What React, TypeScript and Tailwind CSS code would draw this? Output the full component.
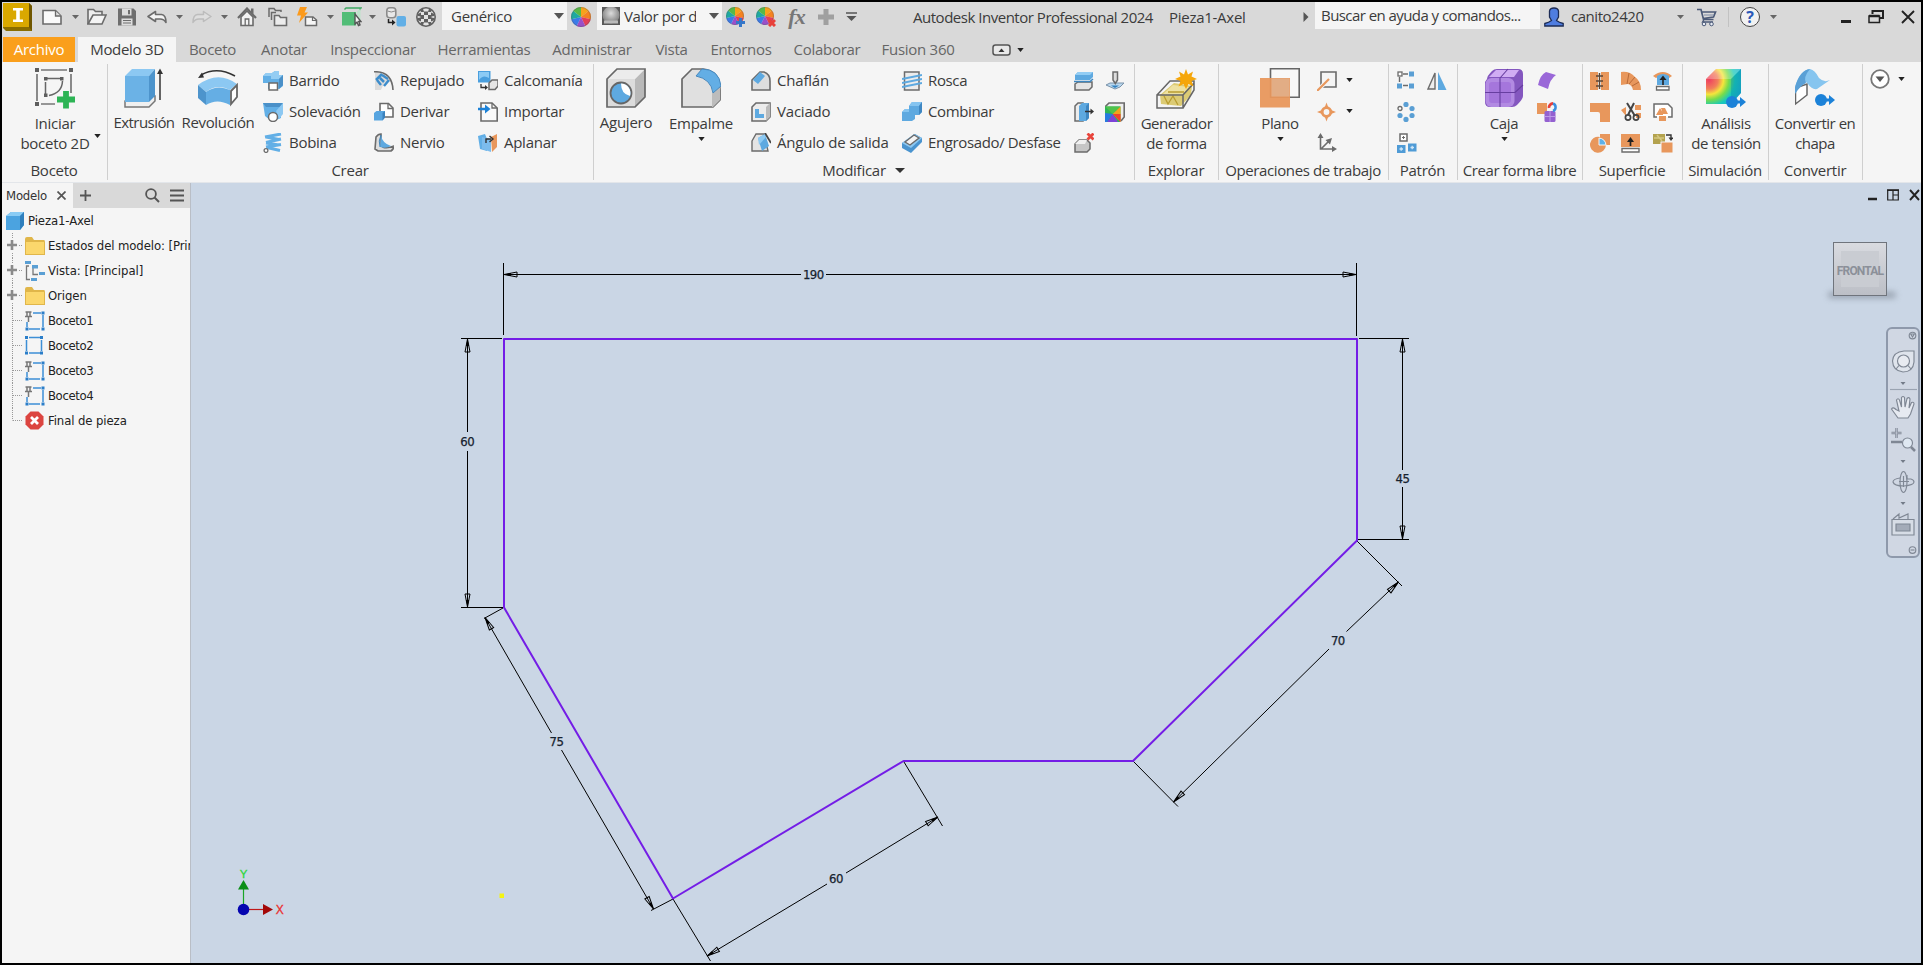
import React from "react";

type P = { className?: string };
const G = "#6b6b6b";
const B = "#62afe6";
const O = "#e8975c";

function Svg({ w = 20, h = 20, vb, className = "", children }: { w?: number; h?: number; vb?: string; className?: string; children: React.ReactNode }) {
  return (
    <svg width={w} height={h} viewBox={vb ?? `0 0 ${w} ${h}`} fill="none" className={`shrink-0 ${className}`}>
      {children}
    </svg>
  );
}

const Caret = ({ className = "" }: P) => (
  <Svg w={7} h={4} className={className}><path d="M0 0H7L3.5 4Z" fill="#666" /></Svg>
);
const DarkCaret = ({ className = "" }: P) => (
  <Svg w={7} h={4} className={className}><path d="M0.3 0H6.7L3.5 4Z" fill="#222" /></Svg>
);

/* ---------- title bar icons ---------- */
const Logo = () => (
  <Svg w={29} h={28} className="ml-[1px]">
    <path d="M0 0H26L29 3V28H3L0 25Z" fill="#8a6d00" />
    <path d="M26 0L29 3V28L26 24Z" fill="#6f5600" />
    <path d="M0 0H26V24H0Z" fill="#d9a800" />
    <path d="M10 5H20V7.5H16.8V16.5H20V19H10V16.5H13.2V7.5H10Z" fill="#fff" />
  </Svg>
);
const NewI = () => (
  <Svg className="ml-[10px]"><path d="M1 3.500H13.5L19 9V17H1Z" fill="#fafafa" stroke={G} strokeWidth="1.600" /><path d="M13.5 4V9H19" fill="#ddd" stroke={G} strokeWidth="1.300" /></Svg>
);
const OpenI = () => (
  <Svg className="ml-[8px]"><path d="M1 17V2.500H6.5L8.500 4.500H15V8" fill="#eee" stroke={G} strokeWidth="1.600" /><path d="M1 17L6 8H19L15 17Z" fill="#f4f4f4" stroke={G} strokeWidth="1.600" /></Svg>
);
const SaveI = () => (
  <Svg className="ml-[10px]"><path d="M1 1.500H16.500L19 4V18.500H1Z" fill="#6e6e6e" /><path d="M5 1.500H14.500V8.500H5Z" fill="#ddd" /><path d="M11 3H13V7.300H11Z" fill="#6e6e6e" /><path d="M4.500 11.500H15.500V18.500H4.500Z" fill="#ddd" /><path d="M6 13.500H14M6 16H14" stroke="#6e6e6e" strokeWidth="1.200" /></Svg>
);
const UndoI = ({ className = "" }: P) => (
  <Svg className={className}><path d="M1 9.500L8.500 4.500V7.500H14.500Q19 8 19 15.500Q17 12 13 12H8.500V14.500Z" fill="#f3f3f3" stroke={G} strokeWidth="1.600" strokeLinejoin="round" /></Svg>
);
const RedoI = ({ className = "" }: P) => (
  <Svg className={className}><path d="M19 9.500L11.500 4.500V7.500H5.500Q1 8 1 15.500Q3 12 7 12H11.500V14.500Z" fill="#dedede" stroke="#bcbcbc" strokeWidth="1.500" strokeLinejoin="round" /></Svg>
);
const HomeI = () => (
  <Svg className="ml-[9px]"><path d="M4 10V18.500H16V10L10 4Z" fill="#f3f3f3" stroke={G} strokeWidth="1.600" /><path d="M1 11L10 1.500L19 11" stroke={G} strokeWidth="2.200" /><path d="M14 1.500H16.500V7L14 5Z" fill={G} /><path d="M8.200 18.500V12H11.800V18.500" stroke={G} strokeWidth="1.300" /></Svg>
);
const FoldersI = () => (
  <Svg className="ml-[11px]"><path d="M1 10V1.500H6L7.500 3.500H13V5" stroke={G} strokeWidth="1.500" /><path d="M3.500 13V5.500H8" stroke={G} strokeWidth="1.500" /><path d="M6.500 18.500V8.500H11L12.500 10.500H18.500V18.500Z" fill="#ececec" stroke={G} strokeWidth="1.600" /></Svg>
);
const BoltI = () => (
  <Svg w={22} className="ml-[8px]"><path d="M4 0H11L8.500 5.500H12L3 16L5 8.500H1Z" fill="#fb9a1c" /><path d="M9.500 10H17L20.500 13V18.500H9.500Z" fill="#f6f6f6" stroke={G} strokeWidth="1.500" /><path d="M16.500 10V13.500H20.500" stroke={G} strokeWidth="1.200" /></Svg>
);
const SelectI = () => (
  <Svg className="ml-[8px]"><path d="M0 5H14V18.500H0Z" fill="#52bd77" /><path d="M2.500 2.500L4 1H19L17.500 3" stroke="#3da862" strokeWidth="1.400" /><path d="M15 4.500L18.500 1.500V13L15 16Z" fill="#bfe3cb" /><path d="M13 7V17L15 15.200L16.500 18.500L18 17.800L16.700 14.500H19Z" fill="#f5f5f5" stroke="#555" strokeWidth="1.400" /></Svg>
);
const ConvertI = () => (
  <Svg className="ml-[10px]"><rect x="0.800" y="0.800" width="9" height="10" rx="3" fill="#e8e8e8" stroke="#8b8b8b" strokeWidth="1.600" /><path d="M1.500 4Q5.300 6 9 4" stroke="#8b8b8b" /><rect x="10.500" y="9" width="9.500" height="10.500" rx="2" fill={B} /><path d="M2.500 12V15.500H7" stroke="#222" strokeWidth="1.500" /><path d="M6 12.500L9.500 15.500L6 18.500Z" fill="#222" /></Svg>
);
const MeshI = () => (
  <Svg className="ml-[10px]"><circle cx="10" cy="10" r="9.200" fill="#e3e3e3" stroke="#606060" strokeWidth="1.600" />
    <g fill="#606060"><path d="M4 3L7 1.500L8 5L5 5ZM16 3L13 1.500L12 5L15 5ZM4 17L7 18.500L8 15L5 15ZM16 17L13 18.500L12 15L15 15ZM1.500 7L5 5.500V9.500L1.500 9ZM18.500 7L15 5.500V9.500L18.500 9ZM1.500 13L5 14.500V10.500L1.500 11ZM18.500 13L15 14.500V10.500L18.500 11Z" /><path d="M8 4.500H12V8H8ZM8 12H12V15.500H8ZM4.500 8H8V12H4.500ZM12 8H15.500V12H12Z" /></g></Svg>
);
const Wheel = ({ className = "", badge = "" }: P & { badge?: "" | "plus" | "x" }) => (
  <Svg className={className}>
    <g transform={badge ? "scale(0.9)" : undefined}>
      <path d="M10 10L10 0A10 10 0 0 1 17.800 3.800Z" fill="#f7a21b" />
      <path d="M10 10L17.800 3.800A10 10 0 0 1 19.700 12.200Z" fill="#f58220" />
      <path d="M10 10L19.700 12.200A10 10 0 0 1 14.300 19Z" fill="#e33f58" />
      <path d="M10 10L14.300 19A10 10 0 0 1 5.700 19Z" fill="#9a4fc9" />
      <path d="M10 10L5.700 19A10 10 0 0 1 0.300 12.200Z" fill="#3b7be8" />
      <path d="M10 10L0.300 12.200A10 10 0 0 1 2.200 3.800Z" fill="#1ea9a0" />
      <path d="M10 10L2.200 3.800A10 10 0 0 1 10 0Z" fill="#57b947" />
      <circle cx="10" cy="10" r="9.500" stroke="#555" strokeOpacity="0.350" />
    </g>
    {badge === "plus" && <path d="M14.500 11V20M10 15.500H19" stroke="#3577c9" strokeWidth="3" />}
    {badge === "x" && <path d="M13 13L19 19M19 13L13 19" stroke="#e8403a" strokeWidth="3" />}
  </Svg>
);
const ShadeI = () => (
  <Svg w={18} h={18} className="ml-[5px]"><defs><radialGradient id="sh" cx="0.5" cy="0.4"><stop stopColor="#dcdcdc" /><stop offset="1" stopColor="#8d8d8d" /></radialGradient></defs><rect width="18" height="18" fill="#5a5a5a" /><circle cx="9" cy="8" r="8.500" fill="url(#sh)" /><path d="M2 15H16" stroke="#bbb" strokeWidth="3" /></Svg>
);
const UserI = () => (
  <Svg className="ml-[4px]"><path d="M0.800 19V16.500Q5 15.500 7.500 13.500L5.500 10V4Q6 1 10 1T14.500 4V10L12.500 13.500Q15 15.500 19.200 16.500V19Z" fill="#4f7de0" stroke="#1d2c55" strokeWidth="1.300" /></Svg>
);
const CartI = () => (
  <Svg w={21} className="ml-[12px]"><path d="M1 2.500H5L7.500 12.500H17.500M5.500 5H19.500L17.500 10L7 11.500" stroke="#4b5a78" strokeWidth="1.700" /><path d="M8 12.500L6.500 15H17" stroke="#4b5a78" strokeWidth="1.300" /><circle cx="8" cy="17" r="1.800" fill="#e8ecf5" stroke="#4b5a78" /><circle cx="15.500" cy="17" r="1.800" fill="#e8ecf5" stroke="#4b5a78" /><path d="M8 8H18" stroke="#7d8aa6" /></Svg>
);
const HelpI = () => (
  <span className="ml-[11px] flex h-[20px] w-[20px] shrink-0 items-center justify-center rounded-full border-[1.5px] border-[#444] bg-[#f2f2f2] text-[16px] font-bold leading-none tracking-normal text-[#2c59b8]">?</span>
);

/* ---------- ribbon icons : large ---------- */
const SketchL = () => (
  <Svg w={40} h={42}><path d="M6 2H32M2 6V33M36 6V25M6 36H20" stroke="#777" strokeWidth="1.700" /><path d="M11 10.500H26M10.500 14V26M27.500 13Q27 25 14 27.500" stroke="#666" strokeWidth="1.500" /><g fill="#5e5e5e"><path d="M0 0H4V4H0ZM34 0H38V4H34ZM0 34H4V38H0ZM9 9H12.500V12.500H9ZM25 9H28.500V12.500H25ZM9 25.500H12.500V29H9Z" /></g><path d="M31 23V40.500M22 31.500H40" stroke="#2db455" strokeWidth="5.800" /></Svg>
);
const ExtrudeL = () => (
  <Svg w={40} h={40}><path d="M1 33L6 28H31V33L25 39H1Z" fill="#f0f0f0" stroke="#777" strokeWidth="1.500" /><path d="M1 8H25V34H1Z" fill="#6bb2e6" /><path d="M1 8L8 1H31L25 8Z" fill="#8cc8f2" /><path d="M25 8L31 1V28L25 34Z" fill="#4d94cc" /><path d="M36 32V4" stroke="#333" strokeWidth="1.500" /><path d="M36 0.500L33 6H39Z" fill="#333" /></Svg>
);
const RevolveL = () => (
  <Svg w={42} h={40}><path d="M1 17Q21 2 40 16L33 22Q20 15 9 24Z" fill="#8cc8f2" /><path d="M1 17L9 24V37L1 30Z" fill="#4d94cc" /><path d="M9 24Q20 16 33 22V37Q20 30 9 37Z" fill="#65aee4" /><path d="M34 23L40 17V29L34 36Z" fill="#fff" stroke="#666" strokeWidth="1.800" /><path d="M4 7Q20 -2 38 8" stroke="#333" strokeWidth="1.600" /><path d="M1 10L5 4.500L7 9.500Z" fill="#333" /></Svg>
);
const HoleL = () => (
  <Svg w={40} h={40}><path d="M1 11L11 1H39V29L29 39H1Z" fill="#dcdcdc" /><path d="M29 11L39 1V29L29 39Z" fill="#b9b9b9" /><path d="M1 11L11 1H39L29 11Z" fill="#ececec" /><path d="M1 11L11 1H39V29L29 39H1Z" stroke="#686868" strokeWidth="1.700" /><circle cx="15" cy="25" r="10.500" fill="#5ea9e0" stroke="#666" strokeWidth="1.800" /><path d="M15 15.500A9.500 9.500 0 0 1 24 28Q15 26 15 15.500Z" fill="#fff" /></Svg>
);
const FilletL = () => (
  <Svg w={40} h={40}><path d="M1 11L11 1H22Q39 3 39 22V32L32 39H1Z" fill="#e0e0e0" stroke="#686868" strokeWidth="1.700" /><path d="M31 25L39 19V32L32 39H31Z" fill="#bcbcbc" /><path d="M15 8L21 1Q38 1 40 18L32 25Q30 11 15 8Z" fill="#63aee5" stroke="#4888bd" /></Svg>
);
const ShapeL = () => (
  <Svg w={42} h={42}><path d="M4 27L18 15L36 18L35 27L25 38L5 36Z" fill="#dccb74" /><path d="M6 27L17 17L33 19L25 28Z" fill="#eee1a0" /><path d="M8 28L12 36L17 28L22 37M12 24L28 24" stroke="#b99d30" strokeWidth="1.300" /><path d="M1 27H27V40H1ZM1 27L14 13H38V22L27 40M27 27L38 15" stroke="#666" strokeWidth="1.500" /><path d="M30 1L32 6.500L37 3.500L35.500 8.500L41 11L35.500 13L37.500 18.500L32.500 16L30 21L27.500 16L22.500 18.500L24.500 13L19 11L24.500 8.500L23 3.500L28 6.500Z" fill="#f5a60a" /></Svg>
);
const PlaneL = () => (
  <Svg w={40} h={40}><path d="M10.500 0.800H39.200V29.200H10.500Z" fill="#f8f8f8" stroke="#666" strokeWidth="1.600" /><path d="M0 10H30V39.500H0Z" fill={O} fillOpacity="0.950" /><path d="M11.500 10.500H29.500V28.500H11.500Z" fill="#e2ad85" /></Svg>
);
const BoxL = () => (
  <Svg w={40} h={40}><path d="M3 11Q3 8 8 3Q10 1 13 1H34Q39 1 39 6V28Q39 31 33 37Q31 39 28 39H6Q1 39 1 34V14Z" fill="#8457bf" /><rect x="1.500" y="10" width="29" height="29" rx="6" fill="#b28ae2" /><path d="M5 9L12 2H35L30 9Z" fill="#d0adf3" /><rect x="5" y="14" width="22" height="21" rx="3" fill="#a576dc" /><path d="M16 10V39M1 24.500H31L39 17M16 10L24 1" stroke="#673ea0" strokeWidth="1.100" /></Svg>
);
const StressL = () => (
  <Svg w={40} h={40}>
    <defs><radialGradient id="st" gradientUnits="userSpaceOnUse" cx="3" cy="12" r="36"><stop stopColor="#ee3f60" /><stop offset="0.250" stopColor="#f2805a" /><stop offset="0.400" stopColor="#f5e53c" /><stop offset="0.550" stopColor="#77dc4c" /><stop offset="0.720" stopColor="#18c9bb" /><stop offset="1" stopColor="#1aa6d6" /></radialGradient></defs>
    <path d="M0 11L10 1H35V25L25 36H0Z" fill="url(#st)" /><path d="M0 11L10 1H35L25 11Z" fill="#fff" fillOpacity="0.250" /><path d="M25 11L35 1V25L25 36Z" fill="#0a7fa0" fillOpacity="0.300" />
    <circle cx="26" cy="34" r="6" fill="#1c82d8" /><path d="M28 34H36" stroke="#1c82d8" strokeWidth="3" /><path d="M34 29L40 34L34 39Z" fill="#1c82d8" />
  </Svg>
);
const SheetL = () => (
  <Svg w={40} h={40}><path d="M0.500 20V36L12 27V16Z" fill="#fff" stroke="#666" strokeWidth="1.500" /><path d="M0 19Q5 2 15 1Q20 2 24 10Q29 15 35 12L22 21Q17 22 13 16Q10 11 0 19Z" fill="#86c5ef" /><path d="M0 19Q5 2 15 1Q8 9 11 15Q5 18 0 26Z" fill="#5aa0d6" /><circle cx="26" cy="32" r="6" fill="#1c82d8" /><path d="M28 32H36" stroke="#1c82d8" strokeWidth="3" /><path d="M34 27L40 32L34 37Z" fill="#1c82d8" /></Svg>
);

/* ---------- ribbon icons : small ---------- */
const S: Record<string, React.ReactNode> = {
  Barrido: <><path d="M0 5L3 2H9L12 0H16V4H20V15L16 18H5V12H0Z" fill={B} /><path d="M0 5L3 2H9L12 0H16V4H20L16 8H8V5Z" fill="#94cdf3" /><path d="M16 8L20 4V14L16 18Z" fill="#4a90c8" /><rect x="6" y="12" width="8.500" height="7" fill="#fff" stroke={G} strokeWidth="1.500" /></>,
  "Solevación": <><path d="M0 1H20L18 9V16L13 18H7L2 14Z" fill={B} /><path d="M0 1H20L17 5H3Z" fill="#4a90c8" /><path d="M13 9L20 1V12L16 17Z" fill="#8cc8f2" /><circle cx="10" cy="15" r="4.500" fill="#fff" stroke={G} strokeWidth="1.500" /></>,
  Bobina: <><path d="M2 4L18 1M3 4L16 6.500M3 9.500L18 6M3 10L16 12M3 14L18 11.500M4 14.500L17 17.500" stroke={B} strokeWidth="3" /><circle cx="3" cy="17.500" r="1.900" fill="#fff" stroke={G} strokeWidth="1.300" /></>,
  Repujado: <><path d="M1 1Q18 1 19 19V12Q11 7 7 19H1Z" fill="#dcdcdc" /><path d="M0 0.800Q18 0 19 19" stroke={G} strokeWidth="1.600" /><path d="M2 9L8 3M3 9L7 14M6 7L10 11M8 4L14 8M10 15L15 9" stroke="#3d8dcc" strokeWidth="2.500" /></>,
  Derivar: <><path d="M6 9V1.500H14.500L19 6V15H11" fill="#fff" stroke={G} strokeWidth="1.600" /><path d="M14 2V6.500H19" stroke={G} strokeWidth="1.300" /><path d="M0 11L2.500 9H11V15.500L8.500 18.500H0Z" fill="#58a5e0" /><path d="M8.500 11L11 9V15.500L8.500 18.500Z" fill="#3c82bd" /></>,
  Nervio: <><path d="M2 4Q4 1 7 1V12Q10 17 20 13Q20 16 17 18H4L1 16Z" fill="#dedede" stroke={G} strokeWidth="1.600" /><path d="M7 2Q8 10 17 13Q12 16 6 14Z" fill="#5ea9e0" /><path d="M7 2Q4 8 6 14" stroke="#3d85bd" /></>,
  "Calcomanía": <><rect x="0" y="0" width="12.500" height="11.500" fill="#4a9fde" /><path d="M1 9Q5 3 11 7V1H1Z" fill="#8ccbf5" /><path d="M11 12L14 9H20V15L17 18.500H11Z" fill="#e5e5e5" stroke={G} strokeWidth="1.500" /><path d="M3 13V16.500H8" stroke="#333" strokeWidth="1.300" /><path d="M7 14L10 16.500L7 19Z" fill="#333" /></>,
  Importar: <><path d="M3 1H14L19.200 6V19H3Z" fill="#fafafa" stroke={G} strokeWidth="1.600" /><path d="M14 1V6H19" stroke={G} strokeWidth="1.300" /><path d="M0 7H9" stroke="#1c82d8" strokeWidth="2.500" /><path d="M7 2.500L12.500 7L7 11.500Z" fill="#1c82d8" /></>,
  Aplanar: <><path d="M0 3L7 1L9 6V18L2 16Z" fill={B} /><path d="M13 4L19 1V14L14 19Z" fill={O} /><path d="M4 4L13 6V19L4 16Z" fill="#7cbced" /><path d="M8 10V6H13M11.500 3L15 6L11.500 9" stroke="#333" strokeWidth="1.400" /></>,
  "Chaflán": <><path d="M1 9L9 1H13Q19 3 19 10V19H1Z" fill="#dedede" stroke={G} strokeWidth="1.600" /><path d="M2 9L9 1L14 5L7 13Z" fill="#5ea9e0" /></>,
  Vaciado: <><path d="M1 5L5 1H19V15L15 19H1Z" fill="#ececec" stroke={G} strokeWidth="1.600" /><path d="M15 5L19 1V15L15 19Z" fill="#bbb" /><path d="M4 7H8V12H13V16H4Z" fill="#5ea9e0" /></>,
  "Ángulo de salida": <><path d="M1 8L5 1H13L17 18H1Z" fill="#e4e4e4" stroke={G} strokeWidth="1.400" /><path d="M7 5L14 1L18 13L11 18Z" fill="#5ea9e0" /><path d="M7 5L14 1L15 4L8 12Z" fill="#8dcaf3" /><path d="M14 0L20 10" stroke="#444" strokeWidth="1.800" /></>,
  Rosca: <><path d="M2.500 1H17V19H2.500Z" fill="#ececec" stroke={G} strokeWidth="1.500" /><path d="M0 8L20 4M0 12L20 8M0 16L20 12" stroke="#5ea9e0" strokeWidth="2.200" /></>,
  Combinar: <><path d="M0 10L3 7H7V4L10 0H20V10L17 13H13V17L10 19H0Z" fill="#5ea9e0" /><path d="M7 4L10 0H20L17 4ZM0 10L3 7H7V10Z" fill="#85c4f0" /><path d="M17 4L20 0V10L17 13Z" fill="#3f87c2" /></>,
  "Engrosado/ Desfase": <><path d="M0 10V15L9 20L20 9V5L13 1Z" fill="#4a94cf" /><path d="M0 10L12 1L20 5L9 15Z" fill="#8dc8f1" /><path d="M3 9L12 2L17 5L8 12Z" fill="#f4f4f4" stroke={G} strokeWidth="1.400" /></>,
  split: <><path d="M1 4L4 1H19V6L16 9H1Z" fill="#5ea9e0" /><path d="M1 4L4 1H19L16 4Z" fill="#93cdf4" /><path d="M1 13L4 11H18V16L15 19H1Z" fill="#e4e4e4" stroke={G} strokeWidth="1.500" /><path d="M0 10.500H16L19 8" stroke="#3c86c0" strokeWidth="1.500" /></>,
  direct: <><path d="M1 14L5 12H19L15 16L10 18Z" fill="#b9d7ee" stroke="#7b93aa" /><path d="M6 14.500H14L10 17Z" fill="#2f80c0" /><path d="M8 1H12.500V9L10.300 12.500L8 9Z" fill="#ddd" stroke={G} strokeWidth="1.500" /></>,
  move: <><path d="M1 4L4 1H9V19H1Z" fill="#ececec" stroke={G} strokeWidth="1.500" /><path d="M5 4L8 1H15V16L12 19H5Z" fill="#5ea9e0" /><path d="M12 4L15 1V16L12 19Z" fill="#3f87c2" /><path d="M11 9.500H18" stroke="#333" strokeWidth="1.500" /><path d="M16.500 6.500L20 9.500L16.500 12.500Z" fill="#333" /></>,
  color: <><path d="M0 5L4 1H19.200V15L16 19" fill="#eee" stroke={G} strokeWidth="1.600" /><rect y="4.500" width="15.500" height="15.500" fill="#2fb457" /><path d="M7.700 12L0 4.500H15.500Z" fill="#4fc24a" /><path d="M7.700 12L15.500 4.500V20Z" fill="#f2a21c" /><path d="M7.700 12L15.500 12V20Z" fill="#ef4130" /><path d="M7.700 12L13 20H2Z" fill="#7c42d8" /><path d="M7.700 12L2 20H0V11Z" fill="#2779e0" /></>,
  erase: <><path d="M1 11L5 7H13L16 10V16L13 19H1Z" fill="#c6c6c6" stroke={G} strokeWidth="1.500" /><path d="M1 11L5 7H13L11 11Z" fill="#f0f0f0" /><path d="M13.500 0.500L19.500 6.500M19.500 0.500L13.500 6.500" stroke="#e8453c" strokeWidth="2.800" /></>,
  axis: <><path d="M4 1H19V16H4Z" stroke={G} strokeWidth="1.600" /><path d="M0 20L12 8" stroke="#f5f5f5" strokeWidth="4" /><path d="M0 20L12 8" stroke={O} strokeWidth="2.200" /></>,
  point: <><circle cx="9.500" cy="10" r="4.300" stroke={O} strokeWidth="2.800" /><path d="M9.500 0.500L11.500 6H7.500ZM9.500 19.500L11.500 14H7.500ZM0 10L5 8V12ZM19 10L14 8V12Z" fill={O} /></>,
  ucs: <><path d="M3.500 2V16H18M4 16L13 7" stroke={G} strokeWidth="1.600" /><path d="M3.500 0L0.500 5H6.500ZM20 16L15 13V19ZM15 5L8.500 7L13 11.500Z" fill={G} /></>,
  rect: <><path d="M6 3H11M6 14.500H11M2.500 6V11" stroke={G} strokeWidth="1.400" /><rect x="1" y="1" width="4" height="4" fill="#fff" stroke={G} strokeWidth="1.300" /><path d="M12 0.500H17V5.500H12ZM0 12.500H5V17.500H0ZM12 12.500H17V17.500H12Z" fill="#5a9fd4" /></>,
  circ: <><circle cx="3" cy="6.500" r="2" fill="#fff" stroke={G} strokeWidth="1.300" /><g fill="#5a9fd4"><circle cx="9" cy="2.500" r="2.600" /><circle cx="15" cy="6.500" r="2.600" /><circle cx="15" cy="13.500" r="2.600" /><circle cx="9" cy="17.400" r="2.600" /><circle cx="3" cy="13.500" r="2.600" /></g></>,
  sketchp: <><rect x="3" y="1" width="7" height="7" fill="#fff" stroke={G} strokeWidth="1.500" /><path d="M5 4.500H8M6.500 3V6" stroke={G} /><path d="M0 12H8.500V20H0ZM11 10.500H19.500V18.500H11Z" fill="#4f9bd6" /><path d="M2.500 16H6M4.200 14.200V17.700M13.500 14.500H17M15.200 12.700V16.200" stroke="#cfe6f7" strokeWidth="1.300" /></>,
  mirror: <><path d="M8 2V18H1Z" fill="#ededed" stroke={G} strokeWidth="1.400" /><path d="M11 1V19H19.500Z" fill="#5ea9e0" /></>,
  face: <><path d="M1 14Q3 4 9 1L19 4Q13 8 11 18Z" fill="#9a68d8" /></>,
  conv: <><rect y="1" width="10" height="11" fill={O} /><rect x="7.500" y="9" width="11" height="11" rx="1.500" fill="#9461d0" /><path d="M7.500 14.500H18.500M13 9V20" stroke="#bd9ae8" /><path d="M12 6A4 4 0 0 1 16 1.500" stroke="#e8403a" strokeWidth="2.800" /><path d="M16 1.500A4 4 0 0 1 16 9" stroke="#3a8fe0" strokeWidth="2.500" /></>,
  s1: <><path d="M0 1H8V19H0ZM11 1H19V19H11Z" fill={O} /><path d="M9.500 2V18M6 5H13M6 10H13M6 15H13" stroke="#5b4636" strokeWidth="1.400" /></>,
  s2: <><path d="M0 1Q9 0 14 6Q20 10 20 19H12Q11 14 7 13L0 14Z" fill={O} /><path d="M8 2L6 13M14 6L8 13M18 11L11 15" stroke="#b86a38" /></>,
  s3: <><path d="M0 5Q10 -3 19 5L16 7Q10 2 3 7Z" fill={O} /><path d="M4 5Q10 1 16 5V14H4Z" fill="#5ea9e0" /><path d="M3.500 15.500H16V19H3.500Z" fill="#fff" stroke={G} strokeWidth="1.300" /><path d="M10 14V7" stroke="#222" strokeWidth="1.600" /><path d="M10 4.500L6.500 9H13.500Z" fill="#222" /></>,
  s4: <path d="M0 1H20V20H10V12Q10 10 8 10H0Z" fill={O} />,
  s5: <><path d="M0 8L5 5V14ZM14 3H20V8H14ZM15 11H20V16H15Z" fill={O} /><path d="M6 1L14 14M13 1L7 13" stroke="#444" strokeWidth="2" /><circle cx="7" cy="15.500" r="2.600" stroke="#444" strokeWidth="1.700" /><circle cx="15" cy="15.500" r="2.600" stroke="#444" strokeWidth="1.700" /></>,
  s6: <><path d="M4 15H1V2H15L19 6V15H15" stroke={G} strokeWidth="1.500" fill="#fff" /><path d="M3 13L7 6L10 11V13ZM8 6H12L15 12H10Z" fill={O} /><rect x="6" y="14" width="7" height="5" fill={O} /></>,
  s7: <><path d="M10 1H20V12H16A8 8 0 1 1 10 4Z" fill={O} /><path d="M9 5A8 8 0 0 1 16 12H9Z" fill="#5eb1ea" stroke="#f5f5f5" /></>,
  s8: <><path d="M0 1H19V14H0Z" fill={O} /><path d="M1 15.500H18V19H1Z" fill="#fff" stroke={G} strokeWidth="1.400" /><path d="M9.500 13V7" stroke="#222" strokeWidth="1.700" /><path d="M9.500 4L6 9H13Z" fill="#222" /></>,
  s9: <><path d="M0 1H12V11H0Z" fill="#b3a24e" /><path d="M1 5H11M4 2L9 8" stroke="#d5c77f" strokeWidth="1.500" /><rect x="8" y="9" width="12" height="11" fill={O} stroke="#f5f5f5" /><path d="M13 2H18V6" stroke="#333" strokeWidth="1.400" /><path d="M15.500 4.500H20.500L18 8Z" fill="#333" /></>,
};
const Small = ({ n, className = "" }: { n: string; className?: string }) => <Svg className={className}>{S[n]}</Svg>;

/* ---------- ribbon building blocks ---------- */
function Group({ label, className, children, caret }: { label: string; className: string; children: React.ReactNode; caret?: boolean }) {
  return (
    <section className={`flex h-[120px] shrink-0 flex-col bg-[linear-gradient(#cfcfcf,#cfcfcf)] bg-[length:1px_116px] bg-[position:right_2px] bg-no-repeat ${className}`}>
      <div className="flex h-[97px] items-start">{children}</div>
      <div className="flex h-[22px] items-center justify-center whitespace-nowrap pr-[2px]">
        {label}
        {caret && <Svg w={10} h={5} className="ml-[9px]"><path d="M0 0H10L5 5Z" fill="#333" /></Svg>}
      </div>
    </section>
  );
}
function Big({ icon, lines, className, caret, up }: { icon: React.ReactNode; lines: string[]; className: string; caret?: boolean; up?: boolean }) {
  return (
    <button className={`flex shrink-0 flex-col items-center pt-[6px] leading-[20px] ${className}`}>
      <span className="flex h-[40px] items-start">{icon}</span>
      <span className={up ? "mt-[4px] flex flex-col items-center whitespace-nowrap" : "mt-[5px] flex flex-col items-center whitespace-nowrap"}>
        {lines.map((l) => <span key={l}>{l}</span>)}
      </span>
      {caret && <DarkCaret className="mt-[4px]" />}
    </button>
  );
}
function Column({ names, className }: { names: string[]; className: string }) {
  return (
    <div className={`flex shrink-0 flex-col pt-[3px] ${className}`}>
      {names.map((n) => (
        <button key={n} className="flex h-[31px] items-center gap-[6px] whitespace-nowrap"><Small n={n} /><span className="pb-px">{n}</span></button>
      ))}
    </div>
  );
}
function Icons({ names, className }: { names: string[]; className: string }) {
  return (
    <div className={`flex shrink-0 flex-col pt-[3px] ${className}`}>
      {names.map((n) => <button key={n} className="flex h-[31px] items-center"><Small n={n} /></button>)}
    </div>
  );
}

const tabs: [string, string][] = [
  ["Boceto", "w-[73px]"], ["Anotar", "w-[70px]"], ["Inspeccionar", "w-[108px]"], ["Herramientas", "w-[114px]"], ["Administrar", "w-[102px]"],
  ["Vista", "w-[57px]"], ["Entornos", "w-[82px]"], ["Colaborar", "w-[90px]"], ["Fusion 360", "w-[92px]"],
];

/* ---------- model browser ---------- */
const Folder = () => <Svg w={20} h={18}><path d="M0 2Q0 0 2 0H7L9 3H19Q20 3 20 5V18H0Z" fill="#e0b64a" /><path d="M1 5H19V17H1Z" fill="#fbd76c" /></Svg>;
const ViewsIcon = () => <Svg w={20} h={20}><path d="M4 5H1.500V18.500H5M8 7V13.500H13" stroke="#777" strokeWidth="1.300" /><path d="M0 0H6V3H0ZM7 4H13V7.500H7ZM14 11H20V14H14ZM6 17H12V20H6Z" fill="#5a9fd4" /></Svg>;
const SketchIcon = ({ pin }: { pin?: boolean }) => (
  <Svg w={20} h={20}>
    {pin ? <path d="M8 2H16M18 4V16M4 18H15M2 16V11" stroke="#3d8fd6" strokeWidth="1.500" /> : <path d="M4 1.500H15M16.500 4V15M4 17H15M1.500 4V15" stroke="#3d8fd6" strokeWidth="1.500" />}
    {pin ? <path d="M16.500 0.500H19.500V3.500H16.500ZM0.500 16.500H3.500V19.500H0.500ZM16.500 16.500H19.500V19.500H16.500Z" fill="#2b7ec9" /> : <path d="M0 0H3V3H0ZM15 0H18V3H15ZM0 15.500H3V18.500H0ZM15 15.500H18V18.500H15Z" fill="#2b7ec9" />}
    {pin && <path d="M0.500 1H6.500M2 1V5M5 1V5M0 5.500H7M3.500 6V11" stroke="#777" strokeWidth="1.500" />}
  </Svg>
);
const EndIcon = () => <Svg w={19} h={19}><path d="M5.500 0.500H13.500L18.500 5.500V13.500L13.500 18.500H5.500L0.500 13.500V5.500Z" fill="#dc4540" /><path d="M6 6L13 13M13 6L6 13" stroke="#fff" strokeWidth="2.800" /></Svg>;

const tree: { t: string; i: React.ReactNode; plus?: boolean; c?: string }[] = [
  { t: "Estados del modelo: [Principal]", i: <Folder />, plus: true },
  { t: "Vista: [Principal]", i: <ViewsIcon />, plus: true, c: "tracking-[0px]" },
  { t: "Origen", i: <Folder />, plus: true },
  { t: "Boceto1", i: <SketchIcon pin />, c: "tracking-[-0.4px]" },
  { t: "Boceto2", i: <SketchIcon />, c: "tracking-[-0.4px]" },
  { t: "Boceto3", i: <SketchIcon pin />, c: "tracking-[-0.4px]" },
  { t: "Boceto4", i: <SketchIcon pin />, c: "tracking-[-0.4px]" },
  { t: "Final de pieza", i: <EndIcon /> },
];

/* ---------- sketch ---------- */
function Head({ x, y, a }: { x: number; y: number; a: number }) {
  return <g transform={`translate(${x} ${y}) rotate(${a})`}><path d="M0 0L13 -2.500V2.500Z" stroke="#000" strokeWidth="1" /><path d="M0 0L7 -1.500V1.500Z" fill="#000" /></g>;
}
function Sketch() {
  return (
    <svg className="block h-[780px] w-[1730px]" viewBox="191 183 1730 780" fill="none">
      <g stroke="#000" strokeWidth="1">
        <path d="M503.500 263V335M1356.500 263V336M504 274.500H801M826 274.500H1356" />
        <path d="M461 338.500H502M461 607.500H503M467.500 339V432M467.500 451V607" />
        <path d="M1359 338.500H1409M1358 539.500H1409M1402.500 339V470M1402.500 487V539" />
        <path d="M1357 541L1402 586M1133 761L1178 806.500M1398.500 582L1346.500 631.500M1329 649L1173.500 802" />
        <path d="M503 608L484 618.500M673 899L651 910.500M485 617.500L551.500 733M561.500 750L653.500 909" />
        <path d="M904 762L942.500 826M673 899L710.500 961M938 817L846 873M827 884L707 956" />
      </g>
      <Head x={504} y={274.5} a={0} /><Head x={1356} y={274.5} a={180} />
      <Head x={467.5} y={339} a={90} /><Head x={467.5} y={607} a={-90} />
      <Head x={1402.5} y={339} a={90} /><Head x={1402.5} y={539} a={-90} />
      <Head x={1398.5} y={582} a={135.5} /><Head x={1173.5} y={802} a={-44.5} />
      <Head x={485} y={617.5} a={60} /><Head x={653.5} y={909} a={240} />
      <Head x={938} y={817} a={149} /><Head x={707} y={956} a={-31} />
      <path d="M504 339H1357V540.500L1133 761H903.500L673 898.500L504 607.500Z" stroke="#741de6" strokeWidth="2" strokeLinejoin="round" />
      <g fill="#16222e" stroke="#16222e" strokeWidth="0.250" fontSize="13" letterSpacing="-0.550" textAnchor="middle" className="font-['DejaVu_Sans_Condensed','DejaVu_Sans',sans-serif] [font-stretch:condensed]">
        <text x="813.300" y="279">190</text><text x="467.200" y="446">60</text><text x="1402.500" y="483">45</text>
        <text x="1337.800" y="644.500">70</text><text x="556.500" y="746">75</text><text x="836" y="882.500">60</text>
      </g>
      <rect x="499.500" y="893.500" width="4.500" height="4.500" fill="#f4f411" />
      <path d="M243.500 904V885" stroke="#18a526" strokeWidth="1.200" /><path d="M243.500 880L249 889.500H238Z" fill="#0b8f17" />
      <path d="M249 909.500H264" stroke="#c01818" strokeWidth="1.200" /><path d="M273 909.500L263 904V915Z" fill="#a30808" />
      <circle cx="243.500" cy="909.500" r="5.800" fill="#0505b0" />
      <text x="243.500" y="877.500" fontSize="11.500" textAnchor="middle" fill="#2cd63a" stroke="#2cd63a" strokeWidth="0.300" className="font-['Liberation_Sans',sans-serif]">Y</text>
      <text x="279.500" y="914" fontSize="12" textAnchor="middle" fill="#ea3030" stroke="#ea3030" strokeWidth="0.300" className="font-['Liberation_Sans',sans-serif]">X</text>
    </svg>
  );
}

export default function App() {
  return (
    <div className="flex h-[965px] w-[1923px] flex-col overflow-hidden border-2 border-black bg-[#f5f5f5] font-['Open_Sans','Noto_Sans',sans-serif] text-[15px] tracking-[-0.27px] text-[#3b3b3b] [font-stretch:88%]">
      {/* title bar */}
      <header className="flex h-[35px] shrink-0 items-start bg-[#d9d9d9]">
        <div className="flex h-[29px] items-center whitespace-nowrap">
          <Logo /><NewI /><Caret className="ml-[10px]" /><OpenI /><SaveI /><UndoI className="ml-[10px]" /><Caret className="ml-[9px]" />
          <RedoI className="ml-[9px]" /><Caret className="ml-[9px]" /><HomeI /><FoldersI /><BoltI /><Caret className="ml-[9px]" /><SelectI /><Caret className="ml-[7px]" /><ConvertI /><MeshI />
          <div className="ml-[6px] flex h-[28px] w-[125px] items-center justify-between self-start bg-[#f5f5f5] pl-[9px] pr-[3px]">Genérico<Svg w={10} h={6}><path d="M0 0H10L5 6Z" fill="#555" /></Svg></div>
          <Wheel className="ml-[4px]" />
          <div className="ml-[6px] flex h-[28px] w-[125px] items-center self-start bg-[#f5f5f5]">
            <ShadeI /><span className="ml-[4px] w-[72px] overflow-hidden tracking-[-0.4px]">Valor por defecto</span><Svg w={10} h={6} className="ml-[13px]"><path d="M0 0H10L5 6Z" fill="#555" /></Svg>
          </div>
          <Wheel className="ml-[4px]" badge="plus" /><Wheel className="ml-[10px]" badge="x" />
          <span className="ml-[10px] w-[21px] text-center font-['Liberation_Serif',serif] text-[22px] font-bold italic leading-[20px] tracking-[-1px] text-[#777]">fx</span>
          <Svg w={16} h={16} className="ml-[11px]"><path d="M8 0V16M0 8H16" stroke="#a0a0a0" strokeWidth="5" /></Svg>
          <Svg w={11} h={9} className="ml-[12px]"><path d="M0 1H11" stroke="#555" strokeWidth="1.500" /><path d="M0.500 4H10.500L5.500 9Z" fill="#555" /></Svg>
          <span className="ml-[56px] w-[240px] pt-[1px] tracking-[-0.48px]">Autodesk Inventor Professional 2024</span>
          <span className="ml-[16px] w-[78px] pt-[1px]">Pieza1-Axel</span>
          <Svg w={6} h={10} className="ml-[56px]"><path d="M0.500 0L5.500 5L0.500 10Z" fill="#555" /></Svg>
          <div className="ml-[6px] flex h-[27px] w-[225px] items-center self-start bg-[#f5f5f5] pb-px pl-[6px] tracking-[-0.56px]">Buscar en ayuda y comandos...</div>
          <UserI /><span className="ml-[7px] w-[74px] tracking-[-0.46px]">canito2420</span><Caret className="ml-[32px]" /><CartI />
          <span className="ml-[11px] h-[20px] w-px bg-[#c2c2c2]" /><HelpI /><Caret className="ml-[10px]" />
          <Svg w={10} h={14} className="ml-[64px]"><path d="M0 11.500H10" stroke="#222" strokeWidth="3" /></Svg>
          <Svg w={16} h={16} className="ml-[17px]"><path d="M4.500 5V2H15V9H12" stroke="#222" strokeWidth="2" /><path d="M1 7H11.500V13.500H1Z" stroke="#222" strokeWidth="1.500" /><path d="M1 7H11.500" stroke="#222" strokeWidth="2.500" /></Svg>
          <Svg w={14} h={14} className="ml-[17px]"><path d="M1 1L13 13M13 1L1 13" stroke="#222" strokeWidth="1.900" /></Svg>
        </div>
      </header>

      {/* ribbon tabs */}
      <nav className="flex h-[25px] shrink-0 bg-[#d9d9d9] text-[#666]">
        <button className="ml-[1px] flex w-[72px] items-center justify-center bg-[#fa9f1c] text-white">Archivo</button>
        <button className="ml-[3px] flex w-[98px] items-center justify-center bg-[#f5f5f5] tracking-[-0.3px] text-[#3b3b3b]">Modelo 3D</button>
        {tabs.map(([t, w]) => <button key={t} className={`flex shrink-0 items-center justify-center whitespace-nowrap ${w}`}>{t}</button>)}
        <div className="ml-[28px] flex items-center gap-[6px]">
          <Svg w={19} h={12}><rect x="1" y="1" width="17" height="10" rx="2.500" fill="#e9e9e9" stroke="#555" strokeWidth="1.500" /><path d="M6.500 8L9.500 4.500L12.500 8Z" fill="#333" /></Svg><DarkCaret />
        </div>
      </nav>

      {/* ribbon */}
      <div className="flex h-[120px] shrink-0 bg-[#f5f5f5]">
        <Group label="Boceto" className="w-[106px]">
          <Big icon={<SketchL />} lines={["Iniciar", "boceto 2D"]} className="w-[106px]" />
          <DarkCaret className="-ml-[14px] mt-[72px]" />
        </Group>
        <Group label="Crear" className="w-[486px]">
          <Big icon={<ExtrudeL />} lines={["Extrusión"]} className="w-[72px] tracking-[-0.55px]" up />
          <Big icon={<RevolveL />} lines={["Revolución"]} className="ml-px w-[74px] tracking-[-0.35px]" up />
          <Column names={["Barrido", "Solevación", "Bobina"]} className="ml-[8px] w-[111px]" />
          <Column names={["Repujado", "Derivar", "Nervio"]} className="w-[104px]" />
          <Column names={["Calcomanía", "Importar", "Aplanar"]} className="w-[110px]" />
        </Group>
        <Group label="Modificar" caret className="w-[541px]">
          <Big icon={<HoleL />} lines={["Agujero"]} className="w-[64px]" up />
          <Big icon={<FilletL />} lines={["Empalme"]} caret className="ml-[11px] w-[64px]" />
          <Column names={["Chaflán", "Vaciado", "Ángulo de salida"]} className="ml-[18px] w-[151px] tracking-[-0.2px]" />
          <Column names={["Rosca", "Combinar", "Engrosado/ Desfase"]} className="w-[172px] tracking-[-0.37px]" />
          <Icons names={["split", "move", "erase"]} className="w-[31px]" />
          <Icons names={["direct", "color"]} className="w-[20px]" />
        </Group>
        <Group label="Explorar" className="w-[84px]">
          <Big icon={<ShapeL />} lines={["Generador", "de forma"]} className="w-[83px] tracking-[-0.45px]" />
        </Group>
        <Group label="Operaciones de trabajo" className="w-[170px] tracking-[-0.38px]">
          <Big icon={<PlaneL />} lines={["Plano"]} caret className="ml-[31px] w-[60px]" />
          <Icons names={["axis", "point", "ucs"]} className="ml-[7px] w-[29px]" />
          <div className="flex flex-col gap-[27px] pt-[16px]"><DarkCaret /><DarkCaret /></div>
        </Group>
        <Group label="Patrón" className="w-[69px]">
          <Icons names={["rect", "circ", "sketchp"]} className="ml-[8px] w-[30px]" />
          <Icons names={["mirror"]} className="w-[20px]" />
        </Group>
        <Group label="Crear forma libre" className="w-[125px] tracking-[-0.38px]">
          <Big icon={<BoxL />} lines={["Caja"]} caret className="ml-[16px] w-[60px]" />
          <Icons names={["face", "conv"]} className="ml-[3px] w-[20px]" />
        </Group>
        <Group label="Superficie" className="w-[100px]">
          <Icons names={["s1", "s4", "s7"]} className="ml-[7px] w-[31px]" />
          <Icons names={["s2", "s5", "s8"]} className="w-[32px]" />
          <Icons names={["s3", "s6", "s9"]} className="w-[20px]" />
        </Group>
        <Group label="Simulación" className="w-[86px]">
          <Big icon={<StressL />} lines={["Análisis", "de tensión"]} className="w-[86px] tracking-[-0.4px]" />
        </Group>
        <Group label="Convertir" className="w-[94px]">
          <Big icon={<SheetL />} lines={["Convertir en", "chapa"]} className="w-[92px] tracking-[-0.5px]" />
        </Group>
        <div className="ml-[7px] flex h-[33px] items-center gap-[8px]">
          <Svg><circle cx="10" cy="10" r="8.800" fill="#fff" stroke="#777" strokeWidth="1.800" /><path d="M5.500 7.500H14.500L10 13Z" fill="#555" /></Svg><DarkCaret />
        </div>
      </div>

      {/* work area */}
      <div className="flex min-h-0 flex-1 border-t border-[#e3e6ea]">
        <aside className="flex w-[189px] shrink-0 flex-col overflow-hidden border-r border-[#b9bec6] bg-[#f5f5f5] font-['DejaVu_Sans_Condensed','DejaVu_Sans',sans-serif] text-[13px] tracking-[-0.1px] text-[#222] [font-stretch:condensed]">
          <div className="flex h-[25px] shrink-0 items-center bg-[#d9d9d9]">
            <div className="flex h-full w-[71px] items-center gap-[10px] bg-[#f5f5f5] pl-[4px] tracking-[-0.2px] text-[#333]">Modelo<Svg w={9} h={9}><path d="M0.500 0.500L8.500 8.500M8.500 0.500L0.500 8.500" stroke="#555" strokeWidth="1.700" /></Svg></div>
            <Svg w={11} h={11} className="ml-[7px]"><path d="M5.500 0V11M0 5.500H11" stroke="#555" strokeWidth="1.800" /></Svg>
            <Svg w={15} h={15} className="ml-[54px]"><circle cx="6" cy="6" r="4.900" stroke="#555" strokeWidth="1.800" /><path d="M9.500 9.500L14 14" stroke="#555" strokeWidth="2" /></Svg>
            <Svg w={14} h={13} className="ml-[10px]"><path d="M0 1.500H14M0 6.500H14M0 11.500H14" stroke="#555" strokeWidth="2" /></Svg>
          </div>
          <div className="flex h-[25px] shrink-0 items-center gap-[4px] pl-[4px]">
            <Svg w={18} h={18}><path d="M0 4L5 0H18V13L14 18H0Z" fill="#4ba3e0" /><path d="M0 4L5 0H18L14 4Z" fill="#8accf5" /><path d="M14 4L18 0V13L14 18Z" fill="#2f7fbd" /></Svg>Pieza1-Axel
          </div>
          {tree.map((r, k) => (
            <div key={r.t} className={`flex h-[25px] shrink-0 items-center whitespace-nowrap ${r.c ?? ""}`}>
              <Svg w={22} h={25}>
                <path d={k === tree.length - 1 ? "M10.500 0V12.500" : "M10.500 0V25"} stroke="#999" strokeDasharray="1 1" />
                <path d="M11 12.500H21" stroke="#999" strokeDasharray="1 1" />
                {r.plus && <><path d="M4 6H16V19H4Z" fill="#f5f5f5" /><path d="M10 7V17M5 12H15" stroke="#8a8a8a" strokeWidth="2.600" /></>}
              </Svg>
              <span className="ml-[1px] flex w-[23px] shrink-0 items-center">{r.i}</span>{r.t}
            </div>
          ))}
        </aside>

        <main className="relative min-w-0 flex-1 overflow-hidden bg-[#cad6e5]">
          <Sketch />
          <div className="absolute right-[1px] top-[6px] flex items-center gap-[10px]">
            <Svg w={9} h={12}><path d="M0 10H9" stroke="#222" strokeWidth="2.500" /></Svg>
            <Svg w={12} h={12}><path d="M0.700 1H11.300V11H0.700ZM6 1V11M6 6H11" stroke="#222" strokeWidth="1.200" /><path d="M0 1.200H12" stroke="#222" strokeWidth="1.600" /></Svg>
            <Svg w={11} h={12}><path d="M1 1L10 11M10 1L1 11" stroke="#222" strokeWidth="1.900" /></Svg>
          </div>
          {/* view cube */}
          <div className="absolute left-[1637px] top-[109px] h-[6px] w-[68px] rounded-full bg-[#6f7884] opacity-60 blur-[3px]" />
          <div className="absolute left-[1642px] top-[59px] flex h-[54px] w-[54px] items-center justify-center border border-[#6f747c] bg-gradient-to-b from-[#d9dbe0] to-[#bcbfc6]">
            <div className="flex h-[36px] w-[38px] items-center justify-center bg-[#c9ccd2] pt-[3px] font-['Roboto',sans-serif] text-[12px] font-bold tracking-[-0.8px] text-[#8b9099] [font-stretch:normal]"><span>FRONTAL</span></div>
          </div>
          {/* navigation bar */}
          <div className="absolute right-[1px] top-[144px] h-[231px] w-[34px] rounded-[6px] border-2 border-[#8e99ab] bg-[#d0d7e3]">
            <svg className="-ml-px block" width="32" height="227" viewBox="0 0 32 227" fill="none" stroke="#7f8794" strokeWidth="1.150">
              <circle cx="25.500" cy="6.500" r="3.300" /><path d="M23.700 5H27.300L25.500 8Z" />
              <path d="M17 22H27V33Q26 43 16 43Q6 42 5.500 32Q6 23 17 22Z" fill="#dfe4ec" /><circle cx="16.500" cy="32" r="6" fill="#e8ebf1" /><path d="M9 40L12 36.500M24 40L21 36.500" />
              <path d="M13.500 53H18.500L16 56Z" fill="#737b88" stroke="none" /><path d="M3 60.500H30" stroke="#9aa3b1" />
              <path d="M11 89L4.500 80Q6 77.500 9 80.500L12 82L9.500 71Q11 68.500 12.500 71L14.500 78L14.500 68.500Q16 66.500 17.500 68.500L18 78L20 69.500Q22 67.500 23 70L22 79L24.500 73.500Q27 72.500 27 75L23.500 85L21 89Z" fill="#e6eaf1" />
              <path d="M9.500 99V109M4.500 104H14.500M4 113H15" strokeWidth="2.400" /><path d="M9.500 99V109M4.500 104H14.500" stroke="#d0d7e3" strokeWidth="0.600" /><circle cx="20.500" cy="114" r="5" fill="#dfe8f2" /><path d="M24 118L28 122" strokeWidth="2.500" />
              <path d="M13.500 131H18.500L16 134Z" fill="#737b88" stroke="none" />
              <ellipse cx="16.500" cy="153" rx="3.500" ry="10.500" /><path d="M13 149Q6 150 6 153Q7 157 17 157Q27 156 27 153Q27 151 24 150M16.500 147V158M12 152.500H22M20 146V150H24" />
              <path d="M13.500 173H18.500L16 176Z" fill="#737b88" stroke="none" />
              <path d="M5 190.500H27V206H5Z" fill="#d7dde6" /><path d="M9 195H23V202H9Z" fill="#a3abb8" /><path d="M6 190L12 185V189L21 185V190" />
              <circle cx="25.500" cy="221" r="3.300" /><path d="M23.500 221H27.500" />
            </svg>
          </div>
        </main>
      </div>
    </div>
  );
}
